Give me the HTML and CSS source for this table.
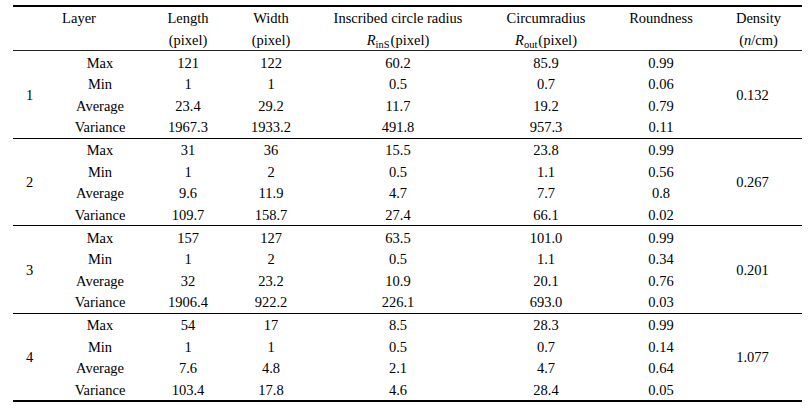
FILE: index.html
```html
<!DOCTYPE html>
<html lang="en">
<head>
<meta charset="utf-8">
<title>Layer statistics</title>
<link rel="stylesheet" href="styles.css">
</head>
<body>
<div class="page">
<table class="stats">
  <colgroup>
    <col class="c-num"><col class="c-label"><col class="c-len"><col class="c-wid">
    <col class="c-ins"><col class="c-circ"><col class="c-round"><col class="c-dens">
  </colgroup>
  <thead>
    <tr class="head-top">
      <th colspan="2">Layer</th>
      <th>Length</th>
      <th>Width</th>
      <th>Inscribed circle radius</th>
      <th>Circumradius</th>
      <th>Roundness</th>
      <th>Density</th>
    </tr>
    <tr class="head-bottom">
      <th colspan="2"></th>
      <th>(pixel)</th>
      <th>(pixel)</th>
      <th><span class="math">R</span><sub>inS</sub>(pixel)</th>
      <th><span class="math">R</span><sub>out</sub>(pixel)</th>
      <th></th>
      <th>(<span class="math">n</span>/cm)</th>
    </tr>
  </thead>
  <tbody class="group">
    <tr><td class="layer" rowspan="4">1</td><td>Max</td><td>121</td><td>122</td><td>60.2</td><td>85.9</td><td>0.99</td><td class="dens" rowspan="4">0.132</td></tr>
    <tr><td>Min</td><td>1</td><td>1</td><td>0.5</td><td>0.7</td><td>0.06</td></tr>
    <tr><td>Average</td><td>23.4</td><td>29.2</td><td>11.7</td><td>19.2</td><td>0.79</td></tr>
    <tr class="last"><td>Variance</td><td>1967.3</td><td>1933.2</td><td>491.8</td><td>957.3</td><td>0.11</td></tr>
  </tbody>
  <tbody class="group">
    <tr><td class="layer" rowspan="4">2</td><td>Max</td><td>31</td><td>36</td><td>15.5</td><td>23.8</td><td>0.99</td><td class="dens" rowspan="4">0.267</td></tr>
    <tr><td>Min</td><td>1</td><td>2</td><td>0.5</td><td>1.1</td><td>0.56</td></tr>
    <tr><td>Average</td><td>9.6</td><td>11.9</td><td>4.7</td><td>7.7</td><td>0.8</td></tr>
    <tr class="last"><td>Variance</td><td>109.7</td><td>158.7</td><td>27.4</td><td>66.1</td><td>0.02</td></tr>
  </tbody>
  <tbody class="group">
    <tr><td class="layer" rowspan="4">3</td><td>Max</td><td>157</td><td>127</td><td>63.5</td><td>101.0</td><td>0.99</td><td class="dens" rowspan="4">0.201</td></tr>
    <tr><td>Min</td><td>1</td><td>2</td><td>0.5</td><td>1.1</td><td>0.34</td></tr>
    <tr><td>Average</td><td>32</td><td>23.2</td><td>10.9</td><td>20.1</td><td>0.76</td></tr>
    <tr class="last"><td>Variance</td><td>1906.4</td><td>922.2</td><td>226.1</td><td>693.0</td><td>0.03</td></tr>
  </tbody>
  <tbody class="group final">
    <tr><td class="layer" rowspan="4">4</td><td>Max</td><td>54</td><td>17</td><td>8.5</td><td>28.3</td><td>0.99</td><td class="dens" rowspan="4">1.077</td></tr>
    <tr><td>Min</td><td>1</td><td>1</td><td>0.5</td><td>0.7</td><td>0.14</td></tr>
    <tr><td>Average</td><td>7.6</td><td>4.8</td><td>2.1</td><td>4.7</td><td>0.64</td></tr>
    <tr class="last"><td>Variance</td><td>103.4</td><td>17.8</td><td>4.6</td><td>28.4</td><td>0.05</td></tr>
  </tbody>
</table>
</div>
</body>
</html>
```

FILE: styles.css
```css
html, body {
  margin: 0;
  padding: 0;
  background: #fff;
}

.page {
  padding: 5px 10px 0 13px;
  font-family: "Liberation Serif", "Times New Roman", serif;
  font-size: 14.5px;
  color: #000;
}

.stats {
  width: 789px;
  table-layout: fixed;
  border-collapse: separate;
  border-spacing: 0;
}

.c-num { width: 42px; }
.c-label { width: 90px; }
.c-len { width: 86px; }
.c-wid { width: 80px; }
.c-ins { width: 174px; }
.c-circ { width: 122px; }
.c-round { width: 108px; }
.c-dens { width: 87px; }

.stats th,
.stats td {
  padding: 0;
  text-align: center;
  vertical-align: middle;
  font-weight: normal;
  white-space: nowrap;
}

.stats th {
  padding-top: 1px;
  line-height: 20.5px;
}

.stats td {
  padding-top: 1.5px;
  line-height: 20.125px;
}

.head-top th {
  border-top: 2px solid #000;
}

.head-bottom th {
  border-bottom: 1px solid #222;
}

.group .last td,
.group .layer,
.group .dens {
  border-bottom: 1px solid #000;
}

.final .last td,
.final .layer,
.final .dens {
  border-bottom: 2px solid #000;
}

.stats td.layer {
  text-align: left;
  padding-left: 13px;
}

.stats td.dens {
  padding-right: 12px;
}

.math {
  font-style: italic;
}

sub {
  font-size: 10.5px;
  line-height: 0;
  vertical-align: -3px;
  margin-right: 1px;
}
```
